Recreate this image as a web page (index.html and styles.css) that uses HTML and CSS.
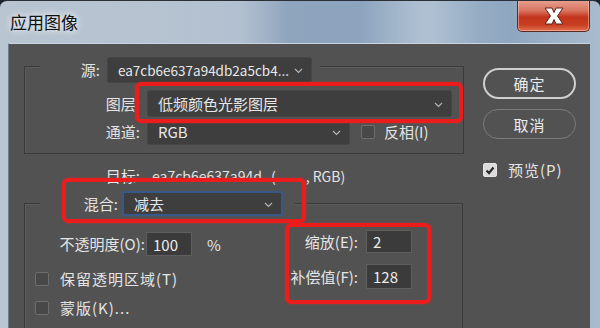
FILE: index.html
```html
<!DOCTYPE html>
<html lang="zh-CN">
<head>
<meta charset="utf-8">
<title>应用图像</title>
<link rel="stylesheet" href="styles.css">
</head>
<body>
<div class="window">
  <div class="titlebar">
    <div class="title">应用图像</div>
    <div class="close-btn">
      <svg width="28" height="20" viewBox="0 0 28 20">
        <path d="M5 2 L12 2 L14 6.5 L16 2 L23 2 L17.5 10 L23 18 L16 18 L14 13.5 L12 18 L5 18 L10.5 10 Z" fill="#fff" stroke="#5a2418" stroke-width="1"/>
      </svg>
    </div>
  </div>
  <div class="client">
    <div class="main">
      <div class="group g1">
        <div class="legend lg1">
          <span class="lbl lbl-src">源:</span>
          <div class="select sel-src"><span class="sel-text">ea7cb6e637a94db2a5cb4...</span><svg class="chev" width="9" height="6" viewBox="0 0 9 6"><polyline points="1,1 4.5,4.5 8,1" fill="none" stroke="#b4b4b4" stroke-width="1.2"/></svg></div>
        </div>
        <div class="rows1">
          <span class="lbl">图层:</span>
          <div class="select sel-layer"><span class="sel-text">低频颜色光影图层</span><svg class="chev" width="9" height="6" viewBox="0 0 9 6"><polyline points="1,1 4.5,4.5 8,1" fill="none" stroke="#b4b4b4" stroke-width="1.2"/></svg></div>
          <span class="lbl">通道:</span>
          <div class="chan-row">
            <div class="select sel-chan"><span class="sel-text">RGB</span><svg class="chev" width="9" height="6" viewBox="0 0 9 6"><polyline points="1,1 4.5,4.5 8,1" fill="none" stroke="#b4b4b4" stroke-width="1.2"/></svg></div>
            <span class="cb"></span>
            <span class="cb-text">反相(I)</span>
          </div>
        </div>
      </div>
      <div class="target-row">
        <span class="lbl">目标:</span>
        <span class="target-text">ea7cb6e637a94d</span><span class="paren">(</span><span class="rgb">, RGB)</span>
      </div>
      <div class="group g2">
        <div class="legend lg2">
          <span class="lbl lbl-blend">混合:</span>
          <div class="select sel-blend"><span class="sel-text">减去</span><svg class="chev" width="9" height="6" viewBox="0 0 9 6"><polyline points="1,1 4.5,4.5 8,1" fill="none" stroke="#b4b4b4" stroke-width="1.2"/></svg></div>
        </div>
        <div class="g2-body">
          <div class="g2-left">
            <div class="opacity-row">
              <span class="lbl lbl-op">不透明度(O):</span>
              <span class="input">100</span>
              <span class="pct">%</span>
            </div>
            <div class="check-row"><span class="cb"></span><span class="cb-text wide">保留透明区域(T)</span></div>
            <div class="check-row"><span class="cb"></span><span class="cb-text wide">蒙版(K)...</span></div>
          </div>
          <div class="g2-right">
            <div class="num-row"><span class="lbl lbl-num">缩放(E):</span><span class="input">2</span></div>
            <div class="num-row"><span class="lbl lbl-num">补偿值(F):</span><span class="input">128</span></div>
          </div>
        </div>
      </div>
    </div>
    <div class="side">
      <div class="btn btn-ok">确定</div>
      <div class="btn btn-cancel">取消</div>
      <div class="preview-row"><span class="cb checked"><svg width="10" height="9" viewBox="0 0 10 9"><polyline points="1.5,4.5 4,7 8.5,1.5" fill="none" stroke="#2a2a2a" stroke-width="2.2"/></svg></span><span class="cb-text">预览(P)</span></div>
    </div>
    <div class="mark mark-layer"></div>
    <div class="mark mark-blend"></div>
    <div class="mark mark-scale"></div>
  </div>
</div>
</body>
</html>
```
FILE: styles.css
```css
* { box-sizing: border-box; }
html, body { margin: 0; padding: 0; }
body {
  width: 600px;
  height: 328px;
  overflow: hidden;
  background: #1c232b;
  font-family: "Noto Sans CJK SC", "Noto Sans", sans-serif;
}
.window {
  width: 600px;
  height: 328px;
  display: flex;
  flex-direction: column;
  border-top: 1px solid #2a3038;
  border-radius: 7px 7px 0 0;
  background:
    linear-gradient(90deg, rgba(255,255,255,0) 0%, rgba(255,255,255,0.25) 40%, rgba(255,255,255,0) 48%, rgba(255,255,255,0.2) 70%, rgba(255,255,255,0) 80%),
    linear-gradient(90deg, #b9c5d1 0%, #a9b8c8 25%, #93a8bf 45%, #7f99b7 60%, #9fb4c9 72%, #8ea6c0 85%, #a9bccd 100%);
  overflow: hidden;
}
.titlebar {
  height: 42px;
  flex: none;
  display: flex;
  justify-content: space-between;
  align-items: flex-start;
}
.title {
  padding: 10px 0 0 10px;
  font-size: 17px;
  line-height: 22px;
  color: #111;
  text-shadow: 0 0 6px rgba(255,255,255,0.9), 0 0 10px rgba(255,255,255,0.6);
}
.close-btn {
  margin: -1px 10px 0 0;
  width: 73px;
  height: 32px;
  border: 1px solid #5b2a22;
  border-top: none;
  border-radius: 0 0 5px 5px;
  background: linear-gradient(180deg, #e7a190 0%, #d8735f 35%, #c2341c 55%, #c83e22 80%, #e0704e 100%);
  box-shadow: inset 0 0 0 1px rgba(255,220,210,0.45);
  display: flex;
  align-items: center;
  justify-content: center;
}
.client {
  position: relative;
  flex: 1;
  margin: 0 10px 0 8px;
  background: #525252;
  border-top: 1px solid #c9d4df;
  border-left: 1px solid #6f7c8a;
  display: flex;
  color: #e4e4e4;
  font-size: 15px;
}
.main {
  width: 455px;
  padding: 22px 0 0 15px;
  flex: none;
}
.lbl {
  font-size: 15px;
  line-height: 20px;
  color: #e4e4e4;
  white-space: nowrap;
}
.group {
  border: 1px solid #3a3a3a;
  box-shadow: 1px 1px 0 #5c5c5c inset;
}
.g1 {
  width: 440px;
  height: 88px;
}
.legend {
  display: flex;
  align-items: center;
  background: #525252;
}
.lg1 {
  margin: -10px 0 0 15px;
  width: 280px;
  height: 26px;
}
.lbl-src {
  width: 60px;
  text-align: right;
}
.select {
  display: flex;
  align-items: center;
  justify-content: space-between;
  background: #3e3e3e;
  border: 1px solid #464646;
  border-radius: 3px;
  padding: 0 8px 0 10px;
  font-size: 15px;
  color: #e8e8e8;
  white-space: nowrap;
  overflow: hidden;
}
.sel-text { line-height: 20px; }
.chev { flex: none; margin-top: 2px; }
.sel-src {
  margin-left: 7px;
  width: 205px;
  height: 26px;
  padding-left: 10px;
  font-size: 13.5px;
}
.rows1 {
  display: grid;
  grid-template-columns: 115px auto;
  column-gap: 7px;
  row-gap: 2px;
  margin-top: 7px;
  align-items: center;
}
.rows1 .lbl { text-align: right; }
.sel-layer { width: 305px; height: 27px; }
.chan-row { display: flex; align-items: center; }
.sel-chan { width: 203px; height: 26px; }
.cb {
  display: inline-flex;
  align-items: center;
  justify-content: center;
  width: 14px;
  height: 14px;
  flex: none;
  border: 1px solid #6e6e6e;
  border-radius: 2px;
  background: #484848;
}
.chan-row .cb { margin-left: 11px; }
.cb-text {
  margin-left: 9px;
  font-size: 15px;
  line-height: 20px;
  white-space: nowrap;
}
.cb-text.wide { margin-left: 11px; letter-spacing: 1px; }
.cb.checked {
  background: #dcdcdc;
  border-color: #e6e6e6;
}
.target-row {
  display: flex;
  align-items: center;
  margin-top: 12px;
  height: 20px;
}
.target-row .lbl {
  width: 116px;
  text-align: right;
}
.target-text {
  margin-left: 12px;
  font-size: 14px;
  line-height: 20px;
}
.paren { margin-left: 9px; font-size: 14px; }
.rgb { margin-left: 30px; font-size: 14px; }
.g2 {
  margin-top: 17px;
  width: 439px;
  height: 200px;
}
.lg2 {
  margin: -13px 0 0 15px;
  width: 255px;
  height: 25px;
}
.lbl-blend {
  width: 78px;
  text-align: right;
}
.sel-blend {
  margin-left: 4px;
  width: 161px;
  height: 25px;
  border: 2px solid #36598a;
  border-radius: 2px;
}
.g2-body {
  display: flex;
  margin-top: 14px;
}
.g2-left {
  width: 253px;
  flex: none;
}
.opacity-row {
  display: flex;
  align-items: center;
  height: 24px;
  margin-top: 2px;
}
.lbl-op {
  width: 120px;
  text-align: right;
}
.input {
  display: flex;
  align-items: center;
  width: 46px;
  height: 24px;
  padding-left: 6px;
  background: #3b3b3b;
  border: 1px solid #5e5e5e;
  font-size: 15px;
  color: #ececec;
  flex: none;
}
.opacity-row .input { margin-left: 1px; }
.pct { margin-left: 15px; font-size: 15px; }
.check-row {
  display: flex;
  align-items: center;
  height: 14px;
  margin: 16px 0 0 10px;
}
.check-row + .check-row { margin-top: 15px; }
.g2-right {
  display: flex;
  flex-direction: column;
  gap: 11px;
}
.num-row {
  display: flex;
  align-items: center;
}
.lbl-num {
  width: 80px;
  text-align: right;
}
.num-row .input { margin-left: 8px; }
.num-row:first-child .input { height: 23px; }
.num-row:last-child .input { height: 25px; }
.side {
  padding: 24px 0 0 19px;
  display: flex;
  flex-direction: column;
}
.btn {
  width: 93px;
  display: flex;
  align-items: center;
  justify-content: center;
  font-size: 15px;
  color: #ececec;
  letter-spacing: 1px;
}
.btn-ok {
  height: 31px;
  border: 2px solid #cfcfcf;
  border-radius: 16px;
}
.btn-cancel {
  margin-top: 10px;
  height: 30px;
  border: 1.5px solid #7b7b7b;
  border-radius: 15px;
}
.preview-row {
  display: flex;
  align-items: center;
  margin-top: 24px;
  height: 14px;
}
.preview-row .cb-text { margin-left: 11px; letter-spacing: 1px; }
.mark {
  position: absolute;
  border: 4px solid #ea1c1c;
  border-radius: 6px;
  box-shadow: 0 0 2px rgba(255,40,40,0.6);
  pointer-events: none;
}
.mark-layer { left: 126px; top: 38px; width: 328px; height: 41px; }
.mark-blend { left: 53px; top: 134px; width: 244px; height: 45px; }
.mark-scale { left: 276px; top: 179px; width: 146px; height: 81px; }
```
